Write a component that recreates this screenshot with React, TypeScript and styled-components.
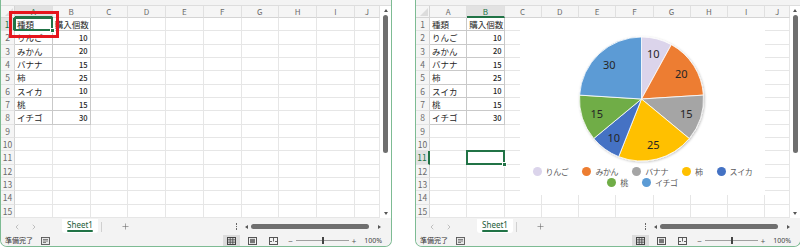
import React from 'react';
import styled, { createGlobalStyle, css } from 'styled-components';
import { ChevronLeft, ChevronRight, Plus } from 'lucide-react';

const GREEN = '#217346';
const FRAME = '#7dbb93';
const FONT = '"Noto Sans CJK JP", "Noto Sans", sans-serif';

const GlobalStyle = createGlobalStyle`
  html, body { margin: 0; padding: 0; background: #ffffff; }
  body { width: 800px; height: 248px; overflow: hidden; font-family: ${FONT}; }
`;

type Row = { name: string; count: number; color: string };
const DATA: Row[] = [
  { name: 'りんご', count: 10, color: '#dbd4eb' },
  { name: 'みかん', count: 20, color: '#ed7d31' },
  { name: 'バナナ', count: 15, color: '#a5a5a5' },
  { name: '柿', count: 25, color: '#ffc000' },
  { name: 'スイカ', count: 10, color: '#4472c4' },
  { name: '桃', count: 15, color: '#70ad47' },
  { name: 'イチゴ', count: 30, color: '#5b9bd5' },
];
const COLS = ['A', 'B', 'C', 'D', 'E', 'F', 'G', 'H', 'I', 'J'];

const Page = styled.div`
  display: flex;
  gap: 23px;
  width: 800px;
  height: 248px;
  overflow: hidden;
  background: #fff;
`;

const Window = styled.div<{ $w: number }>`
  position: relative;
  flex: none;
  width: ${p => p.$w}px;
  height: 247px;
  box-sizing: border-box;
  border: 1px solid ${FRAME};
  border-top: none;
  border-radius: 0 0 7px 7px;
  display: flex;
  flex-direction: column;
  overflow: hidden;
  background: #f3f3f3;
`;

const TopStrip = styled.div`
  height: 5px;
  flex: none;
  background: #f3f3f3;
  border-bottom: 1px solid #dddddd;
`;

const GridArea = styled.div`
  display: flex;
  height: 212px;
  flex: none;
  background: #fff;
`;

const Sheet = styled.div<{ $cw: number }>`
  position: relative;
  flex: 1;
  display: grid;
  grid-template-columns: 14px repeat(9, ${p => p.$cw}px) 1fr;
  grid-template-rows: 12px repeat(15, 1fr);
  background: #fff;
`;

const headerBase = css`
  box-sizing: border-box;
  background: #f5f5f5;
  color: #6b6b6b;
  font-size: 8px;
  display: flex;
  align-items: center;
  justify-content: center;
  overflow: hidden;
`;

const Corner = styled.div`
  ${headerBase};
  position: relative;
  border-right: 1px solid #d4d4d4;
  border-bottom: 1px solid #d4d4d4;
  &::after {
    content: '';
    position: absolute;
    right: 1px;
    bottom: 1px;
    border-left: 8px solid transparent;
    border-bottom: 8px solid #dcdcdc;
  }
`;

const ColHeader = styled.div<{ $active?: boolean }>`
  ${headerBase};
  border-right: 1px solid #e0e0e0;
  border-bottom: 1px solid #d4d4d4;
  ${p => p.$active && css`
    background: #e2e2e2;
    color: ${GREEN};
    border-bottom: 2px solid ${GREEN};
  `}
`;

const RowHeader = styled.div<{ $active?: boolean }>`
  ${headerBase};
  font-size: 8.5px;
  border-right: 1px solid #d4d4d4;
  border-bottom: 1px solid #e3e3e3;
  ${p => p.$active && css`
    background: #e2e2e2;
    color: ${GREEN};
    border-right: 2px solid ${GREEN};
  `}
`;

const Cell = styled.div<{ $data?: boolean; $num?: boolean; $sel?: boolean }>`
  position: relative;
  box-sizing: border-box;
  border-right: 1px solid ${p => (p.$data ? '#c9c9c9' : '#e6e6e6')};
  border-bottom: 1px solid ${p => (p.$data ? '#c9c9c9' : '#e6e6e6')};
  display: flex;
  align-items: center;
  justify-content: ${p => (p.$num ? 'flex-end' : 'flex-start')};
  padding: 0 2px;
  font-size: ${p => (p.$num ? '7.5px' : '8.5px')};
  font-weight: ${p => (p.$num ? 500 : 400)};
  color: #262626;
  white-space: nowrap;
  ${p => p.$sel && css`
    z-index: 2;
    &::after {
      content: '';
      position: absolute;
      inset: -1px -1px -1px -1px;
      border: 2px solid ${GREEN};
    }
    &::before {
      content: '';
      position: absolute;
      right: -3px;
      bottom: -3px;
      width: 3px;
      height: 3px;
      background: ${GREEN};
      border: 1px solid #fff;
      z-index: 3;
    }
  `}
`;

const VScroll = styled.div<{ $w: number }>`
  flex: none;
  width: ${p => p.$w}px;
  display: flex;
  flex-direction: column;
  align-items: center;
  padding: 3px 0 3px;
  box-sizing: border-box;
  background: #fff;
`;

const ArrowUp = styled.div`
  width: 0;
  height: 0;
  border-left: 2.5px solid transparent;
  border-right: 2.5px solid transparent;
  border-bottom: 3px solid #555;
`;

const ArrowDown = styled(ArrowUp)`
  border-bottom: none;
  border-top: 3px solid #555;
`;

const VThumb = styled.div`
  width: 5px;
  height: 138px;
  margin-top: 3px;
  border-radius: 3px;
  background: #6f6f6f;
`;

const Spacer = styled.div`
  flex: 1;
`;

const TabBar = styled.div`
  height: 17px;
  flex: none;
  display: flex;
  align-items: center;
  background: #f3f3f3;
  color: #8a8a8a;
`;

const NavArrows = styled.div`
  display: flex;
  align-items: center;
  gap: 9px;
  padding-left: 12px;
  width: 61px;
  box-sizing: border-box;
`;

const SheetTab = styled.div`
  height: 14px;
  width: 36px;
  align-self: flex-start;
  margin-top: 1px;
  display: flex;
  flex-direction: column;
  align-items: center;
  justify-content: center;
  background: #ffffff;
  border-radius: 0 0 3px 3px;
  font-size: 8px;
  color: #1a5c38;
  font-family: "Noto Sans", sans-serif;
  line-height: 9px;
`;

const TabLine = styled.div`
  width: 26px;
  height: 1.5px;
  margin-top: 1px;
  background: ${GREEN};
  border-radius: 1px;
`;

const TabSep = styled.div`
  width: 1px;
  height: 10px;
  margin-left: 3px;
  background: #d0d0d0;
`;

const AddBtn = styled.div`
  display: flex;
  margin-left: 19px;
  color: #666;
`;

const Dots = styled.div`
  display: flex;
  flex-direction: column;
  gap: 1px;
  margin-right: 8px;
  & > span {
    width: 1.5px;
    height: 1.5px;
    background: #666;
  }
`;

const HScroll = styled.div`
  display: flex;
  align-items: center;
  gap: 3px;
  width: 136px;
  margin-right: 10px;
`;

const ArrowLeft = styled.div`
  width: 0;
  height: 0;
  border-top: 2.5px solid transparent;
  border-bottom: 2.5px solid transparent;
  border-right: 3px solid #555;
`;

const ArrowRight = styled(ArrowLeft)`
  border-right: none;
  border-left: 3px solid #555;
  margin-left: 6px;
`;

const HThumb = styled.div`
  flex: 1;
  height: 5px;
  border-radius: 3px;
  background: #6f6f6f;
`;

const StatusBar = styled.div`
  height: 11px;
  flex: none;
  display: flex;
  align-items: center;
  background: #f3f3f3;
  font-size: 7px;
  color: #333;
`;

const Ready = styled.span`
  margin-left: 4px;
  width: 36px;
  line-height: 11px;
`;

const ViewGroup = styled.div`
  display: flex;
  align-items: stretch;
  height: 11px;
  gap: 4px;
`;

const ViewBtn = styled.div<{ $on?: boolean }>`
  width: 17px;
  display: flex;
  align-items: center;
  justify-content: center;
  background: ${p => (p.$on ? '#dcdcdc' : 'transparent')};
`;

const Zoom = styled.div`
  display: flex;
  align-items: center;
  margin-left: 6px;
  color: #555;
  font-size: 8px;
`;

const Track = styled.div`
  position: relative;
  width: 53px;
  height: 1px;
  margin: 0 3px;
  background: #a0a0a0;
`;

const Knob = styled.div`
  position: absolute;
  left: 26px;
  top: -3px;
  width: 2px;
  height: 7px;
  background: #444;
`;

const Percent = styled.span`
  margin-left: 8px;
  margin-right: 9px;
  font-family: "Noto Sans", sans-serif;
  font-size: 7px;
  color: #444;
`;

const RedBox = styled.div`
  position: absolute;
  left: 8px;
  top: 11px;
  width: 50px;
  height: 27px;
  box-sizing: border-box;
  border: 3px solid #e5161d;
  z-index: 5;
`;

const Chart = styled.div`
  position: absolute;
  left: 104px;
  top: 12px;
  width: 245px;
  height: 177px;
  background: #fff;
  display: flex;
  flex-direction: column;
  z-index: 4;
`;

const PieSvg = styled.svg`
  display: block;
  flex: none;
`;

const LegendRow = styled.div`
  display: flex;
  justify-content: center;
  gap: 14px;
  height: 11px;
  align-items: center;
`;

const LegendItem = styled.div`
  display: flex;
  align-items: center;
  gap: 4px;
  font-size: 8px;
  letter-spacing: -0.4px;
  color: #595959;
`;

const Dot = styled.span<{ $c: string }>`
  width: 9px;
  height: 9px;
  border-radius: 50%;
  background: ${p => p.$c};
`;

const GridIcon = () => (
  <svg width="9" height="8" viewBox="0 0 9 8">
    <rect x="0.5" y="0.5" width="8" height="7" fill="none" stroke="#444" strokeWidth="1" />
    <path d="M3.2 0.5V7.5M5.8 0.5V7.5M0.5 2.8H8.5M0.5 5.2H8.5" stroke="#444" strokeWidth="0.8" />
  </svg>
);
const LayoutIcon = () => (
  <svg width="9" height="8" viewBox="0 0 9 8">
    <rect x="0.5" y="0.5" width="8" height="7" fill="none" stroke="#555" strokeWidth="1" />
    <rect x="2" y="1.8" width="5" height="4.4" fill="#777" />
  </svg>
);
const BreakIcon = () => (
  <svg width="9" height="8" viewBox="0 0 9 8">
    <rect x="0.5" y="0.5" width="8" height="7" fill="none" stroke="#555" strokeWidth="1" />
    <path d="M4.5 0.5V4.5M0.5 4.5H3M6 4.5H8.5" stroke="#555" strokeWidth="0.9" />
  </svg>
);
const AccessIcon = () => (
  <svg width="9" height="8" viewBox="0 0 9 8">
    <rect x="0.5" y="0.5" width="8" height="7" fill="#e8e8e8" stroke="#555" strokeWidth="0.9" />
    <path d="M2 2.5H7M2 4H7M2 5.5H5" stroke="#666" strokeWidth="0.8" />
  </svg>
);

function arcPath(cx: number, cy: number, r: number, a0: number, a1: number) {
  const rad = (a: number) => ((a - 90) * Math.PI) / 180;
  const x0 = cx + r * Math.cos(rad(a0));
  const y0 = cy + r * Math.sin(rad(a0));
  const x1 = cx + r * Math.cos(rad(a1));
  const y1 = cy + r * Math.sin(rad(a1));
  const large = a1 - a0 > 180 ? 1 : 0;
  return `M${cx} ${cy} L${x0.toFixed(2)} ${y0.toFixed(2)} A${r} ${r} 0 ${large} 1 ${x1.toFixed(2)} ${y1.toFixed(2)} Z`;
}

const PieChart: React.FC = () => {
  const total = DATA.reduce((s, d) => s + d.count, 0);
  const cx = 121.5;
  const cy = 81;
  const r = 62;
  let acc = 0;
  const slices = DATA.map(d => {
    const a0 = (acc / total) * 360;
    acc += d.count;
    const a1 = (acc / total) * 360;
    const mid = (((a0 + a1) / 2) * Math.PI) / 180;
    return {
      ...d,
      path: arcPath(cx, cy, r, a0, a1),
      lx: cx + 47 * Math.sin(mid),
      ly: cy - 47 * Math.cos(mid),
    };
  });
  return (
    <Chart>
      <PieSvg width="245" height="148" viewBox="0 0 245 148">
        <defs>
          <filter id="pieShadow" x="-10%" y="-10%" width="125%" height="125%">
            <feDropShadow dx="0.8" dy="0.8" stdDeviation="1" floodColor="#000" floodOpacity="0.25" />
          </filter>
        </defs>
        <g filter="url(#pieShadow)">
          {slices.map(s => (
            <path key={s.name} d={s.path} fill={s.color} stroke="#fff" strokeWidth="0.8" />
          ))}
        </g>
        {slices.map(s => (
          <text
            key={s.name + 't'}
            x={s.lx}
            y={s.ly}
            textAnchor="middle"
            dominantBaseline="central"
            fontFamily='"Noto Sans", sans-serif'
            fontSize="11"
            fill="#262626"
          >
            {s.count}
          </text>
        ))}
      </PieSvg>
      <LegendRow>
        {DATA.slice(0, 5).map(d => (
          <LegendItem key={d.name}>
            <Dot $c={d.color} />
            {d.name}
          </LegendItem>
        ))}
      </LegendRow>
      <LegendRow>
        {DATA.slice(5).map(d => (
          <LegendItem key={d.name}>
            <Dot $c={d.color} />
            {d.name}
          </LegendItem>
        ))}
      </LegendRow>
    </Chart>
  );
};

type WinProps = {
  width: number;
  colW: number;
  scrollW: number;
  selCol: number;
  selRow: number;
  redBox?: boolean;
  chart?: boolean;
};

const ExcelWindow: React.FC<WinProps> = ({ width, colW, scrollW, selCol, selRow, redBox, chart }) => {
  const cells: React.ReactNode[] = [];
  cells.push(<Corner key="corner" />);
  COLS.forEach((c, i) => cells.push(<ColHeader key={'h' + c} $active={i === selCol}>{c}</ColHeader>));
  for (let r = 1; r <= 15; r++) {
    cells.push(<RowHeader key={'r' + r} $active={r === selRow}>{r}</RowHeader>);
    COLS.forEach((c, i) => {
      const inData = r <= 8 && i <= 1;
      let content: React.ReactNode = null;
      let num = false;
      if (inData) {
        if (r === 1) content = i === 0 ? '種類' : '購入個数';
        else if (i === 0) content = DATA[r - 2].name;
        else {
          content = DATA[r - 2].count;
          num = true;
        }
      }
      cells.push(
        <Cell key={c + r} $data={inData} $num={num} $sel={i === selCol && r === selRow}>
          {content}
        </Cell>
      );
    });
  }
  return (
    <Window $w={width}>
      <TopStrip />
      <GridArea>
        <Sheet $cw={colW}>
          {cells}
          {chart && <PieChart />}
        </Sheet>
        <VScroll $w={scrollW}>
          <ArrowUp />
          <VThumb />
          <Spacer />
          <ArrowDown />
        </VScroll>
      </GridArea>
      <TabBar>
        <NavArrows>
          <ChevronLeft size={8} strokeWidth={1.5} />
          <ChevronRight size={8} strokeWidth={1.5} />
        </NavArrows>
        <SheetTab>
          Sheet1
          <TabLine />
        </SheetTab>
        <TabSep />
        <AddBtn>
          <Plus size={9} strokeWidth={1.5} />
        </AddBtn>
        <Spacer />
        <Dots>
          <span />
          <span />
          <span />
        </Dots>
        <HScroll>
          <ArrowLeft />
          <HThumb />
          <ArrowRight />
        </HScroll>
      </TabBar>
      <StatusBar>
        <Ready>準備完了</Ready>
        <AccessIcon />
        <Spacer />
        <ViewGroup>
          <ViewBtn $on>
            <GridIcon />
          </ViewBtn>
          <ViewBtn>
            <LayoutIcon />
          </ViewBtn>
          <ViewBtn>
            <BreakIcon />
          </ViewBtn>
        </ViewGroup>
        <Zoom>
          −
          <Track>
            <Knob />
          </Track>
          +
        </Zoom>
        <Percent>100%</Percent>
      </StatusBar>
      {redBox && <RedBox />}
    </Window>
  );
};

export default function App() {
  return (
    <>
      <GlobalStyle />
      <Page>
        <ExcelWindow width={392} colW={37.75} scrollW={11} selCol={0} selRow={1} redBox />
        <ExcelWindow width={386} colW={37.25} scrollW={10} selCol={1} selRow={11} chart />
      </Page>
    </>
  );
}
